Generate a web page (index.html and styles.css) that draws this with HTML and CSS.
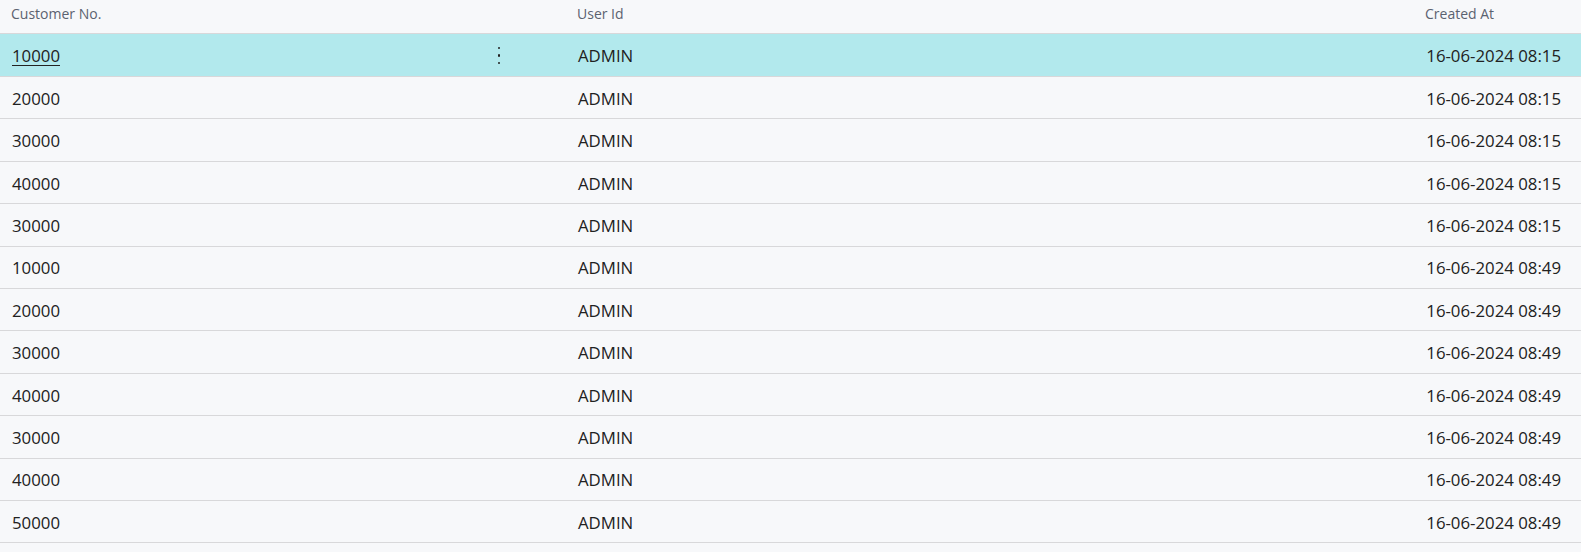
FILE: index.html
```html
<!DOCTYPE html>
<html lang="en">
<head>
<meta charset="utf-8">
<title>Change Log</title>
<link rel="stylesheet" href="styles.css">
</head>
<body>
<div class="list">
  <div class="row head">
    <div class="cell c1">Customer No.</div>
    <div class="cell c2">User Id</div>
    <div class="cell c3 hd3">Created At</div>
  </div>
  <div class="row sel">
    <div class="cell c1"><a class="link" href="#">10000</a><span class="kebab"><i></i><i></i><i></i></span></div>
    <div class="cell c2">ADMIN</div>
    <div class="cell c3">16-06-2024 08:15</div>
  </div>
  <div class="row"><div class="cell c1">20000</div><div class="cell c2">ADMIN</div><div class="cell c3">16-06-2024 08:15</div></div>
  <div class="row"><div class="cell c1">30000</div><div class="cell c2">ADMIN</div><div class="cell c3">16-06-2024 08:15</div></div>
  <div class="row"><div class="cell c1">40000</div><div class="cell c2">ADMIN</div><div class="cell c3">16-06-2024 08:15</div></div>
  <div class="row"><div class="cell c1">30000</div><div class="cell c2">ADMIN</div><div class="cell c3">16-06-2024 08:15</div></div>
  <div class="row"><div class="cell c1">10000</div><div class="cell c2">ADMIN</div><div class="cell c3">16-06-2024 08:49</div></div>
  <div class="row"><div class="cell c1">20000</div><div class="cell c2">ADMIN</div><div class="cell c3">16-06-2024 08:49</div></div>
  <div class="row"><div class="cell c1">30000</div><div class="cell c2">ADMIN</div><div class="cell c3">16-06-2024 08:49</div></div>
  <div class="row"><div class="cell c1">40000</div><div class="cell c2">ADMIN</div><div class="cell c3">16-06-2024 08:49</div></div>
  <div class="row"><div class="cell c1">30000</div><div class="cell c2">ADMIN</div><div class="cell c3">16-06-2024 08:49</div></div>
  <div class="row"><div class="cell c1">40000</div><div class="cell c2">ADMIN</div><div class="cell c3">16-06-2024 08:49</div></div>
  <div class="row"><div class="cell c1">50000</div><div class="cell c2">ADMIN</div><div class="cell c3">16-06-2024 08:49</div></div>
</div>
</body>
</html>
```

FILE: styles.css
```css
html, body {
  margin: 0;
  padding: 0;
  background: #f7f8fa;
}
body {
  font-family: "Open Sans", "Noto Sans", sans-serif;
  color: #212121;
  height: 552px;
  overflow: hidden;
}
.list {
  display: flex;
  flex-direction: column;
}
.row {
  display: grid;
  grid-template-columns: 569px 844px 168px;
  height: 42.42px;
  box-sizing: border-box;
  border-bottom: 1px solid #d8d8da;
  font-size: 16.8px;
}
.row.head {
  height: 34px;
  font-size: 14px;
  color: #5b6270;
  align-items: start;
}
.row.sel {
  height: 43px;
  background: #b2e9ed;
}
.cell {
  display: flex;
  align-items: center;
  padding-left: 12px;
  padding-top: 1px;
  white-space: nowrap;
}
.head .cell {
  padding-top: 4px;
  padding-left: 11px;
}
.c2 {
  padding-left: 9px;
}
.head .c2 {
  padding-left: 8px;
}
.c3 {
  justify-content: flex-end;
  padding-right: 20px;
}
.head .hd3 {
  justify-content: flex-start;
  padding-left: 12px;
}
.link {
  color: #212121;
  text-decoration: underline;
  text-underline-offset: 3px;
}
.kebab {
  margin-left: auto;
  margin-right: 58px;
  width: 24px;
  height: 24px;
  display: flex;
  flex-direction: column;
  align-items: center;
  justify-content: center;
  gap: 5px;
}
.kebab i {
  display: block;
  width: 2.4px;
  height: 2.4px;
  border-radius: 50%;
  background: #212121;
}
```
